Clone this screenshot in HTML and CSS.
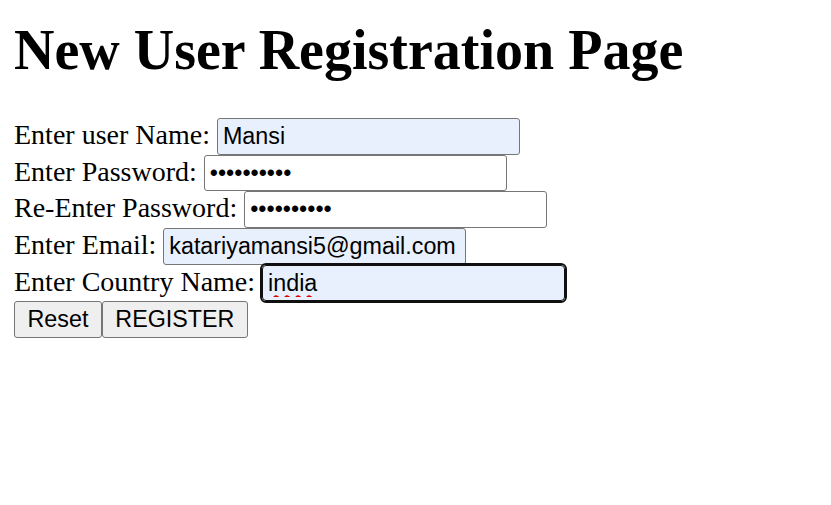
FILE: index.html
```html
<!DOCTYPE html>
<html>
<head>
<meta charset="utf-8">
<link rel="stylesheet" href="styles.css">
</head>
<body>
<h1 class="title">New User Registration Page</h1>
<form class="form">
Enter user Name: <input class="field filled" type="text" value="Mansi"><br>
Enter Password: <input class="field" type="password" value="abcdefghij"><br>
Re-Enter Password: <input class="field" type="password" value="abcdefghij"><br>
Enter Email: <input class="field filled" type="text" value="katariyamansi5@gmail.com"><br>
Enter Country Name: <input class="field filled focused" type="text" value="india"><br>
<button class="btn" type="button">Reset</button><button class="btn" type="button">REGISTER</button>
</form>
</body>
</html>
```
FILE: styles.css
```css
body {
  margin: 14px;
  font-family: "Liberation Serif", "Times New Roman", serif;
  font-size: 28px;
  color: #000;
  background: #fff;
}
.title {
  margin: 4px 0 36px 0;
  font-size: 56px;
  font-weight: bold;
}
.form {
  margin: 0;
}
.field {
  box-sizing: border-box;
  width: 303px;
  height: 36.7px;
  margin: 0;
  padding: 1px 5px;
  border: 1px solid #767676;
  border-radius: 3px;
  background: #fff;
  font-family: "Liberation Sans", Arial, sans-serif;
  font-size: 23.3px;
  color: #000;
  vertical-align: baseline;
  outline: none;
}
.filled {
  background: #e8f0fe;
}
.focused {
  border: 1px solid #101010;
  outline: 2px solid #101010;
  outline-offset: 0;
  border-radius: 4px;
  text-decoration: underline wavy #e00000;
  text-decoration-skip-ink: none;
  text-underline-offset: 4px;
}
.btn {
  box-sizing: border-box;
  height: 36.7px;
  margin: 0;
  padding: 1px 12.5px;
  border: 1px solid #767676;
  border-radius: 3px;
  background: #efefef;
  font-family: "Liberation Sans", Arial, sans-serif;
  font-size: 23.3px;
  color: #000;
  vertical-align: baseline;
}
```
